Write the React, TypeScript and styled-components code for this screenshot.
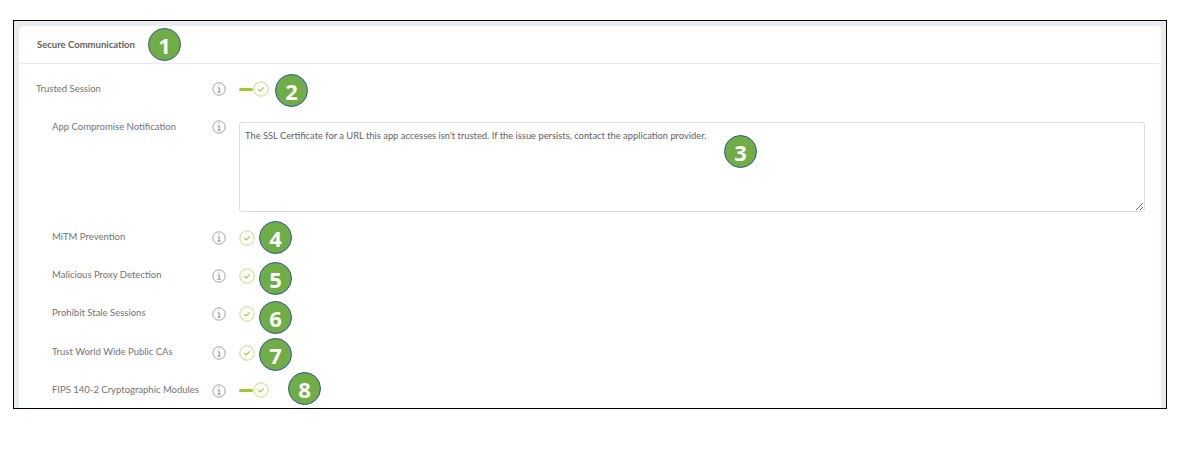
import styled, { createGlobalStyle } from "styled-components";

const GlobalStyle = createGlobalStyle`
  body {
    margin: 0;
    background: #fff;
    font-family: "Lato", "Liberation Sans", sans-serif;
  }
`;

const Frame = styled.div`
  box-sizing: border-box;
  width: 1154px;
  height: 389px;
  margin: 20px 0 0 13px;
  border: 1px solid #000;
  background: #e9ecef;
  padding: 5px 5px 0;
  overflow: hidden;
`;

const Card = styled.section`
  background: #fff;
  border-radius: 5px 5px 0 0;
  height: 100%;
`;

const CardHeader = styled.header`
  display: flex;
  align-items: center;
  height: 37px;
  padding-left: 18px;
  border-bottom: 1px solid #e8eaec;
`;

const Title = styled.h2`
  margin: 0 0 1px;
  width: 112px;
  font-size: 9.5px;
  font-weight: 700;
  color: #5f5f5f;
`;

const Body = styled.div`
  position: relative;
  padding-top: 17px;
`;

const Row = styled.div<{ $height: number; $indent?: boolean }>`
  display: flex;
  align-items: flex-start;
  height: ${(p) => p.$height}px;
  padding-left: ${(p) => (p.$indent ? 33 : 17)}px;
`;

const Label = styled.label<{ $indent?: boolean }>`
  width: ${(p) => (p.$indent ? 160 : 176)}px;
  font-size: 9.5px;
  line-height: 15px;
  color: #737373;
  white-space: nowrap;
`;

const InfoSlot = styled.span<{ $top: number }>`
  display: flex;
  align-items: center;
  flex: none;
  width: 27px;
  height: 16px;
  margin-top: ${(p) => p.$top}px;
`;

const Toggle = styled.span<{ $top: number }>`
  display: flex;
  align-items: center;
  margin-top: ${(p) => p.$top}px;
  height: 16px;
`;

const Track = styled.span`
  width: 14px;
  height: 3px;
  border-radius: 2px;
  background: #a3c62f;
`;

const Badge = styled.span<{ $gap?: number; $top?: number }>`
  box-sizing: border-box;
  flex: none;
  display: flex;
  align-items: center;
  justify-content: center;
  width: 33px;
  height: 33px;
  margin-left: ${(p) => p.$gap ?? 0}px;
  margin-top: ${(p) => p.$top ?? 0}px;
  border: 1px solid #2f5597;
  border-radius: 50%;
  background: #70ad47;
  color: #fff;
  font-family: "Open Sans", "Liberation Sans", sans-serif;
  font-size: 22px;
  font-weight: 700;
  line-height: 1;
`;

const FloatingBadge = styled(Badge)`
  position: absolute;
  left: 705px;
  top: 71px;
`;

const MessageBox = styled.textarea`
  box-sizing: border-box;
  width: 906px;
  height: 90px;
  margin-top: 3px;
  padding: 6px 5px;
  border: 1px solid #dcdcdc;
  border-radius: 3px;
  outline: none;
  background: #fff;
  color: #5f5f5f;
  font-family: inherit;
  font-size: 9.35px;
  line-height: 14px;
`;

const Info = ({ top = 1 }: { top?: number }) => (
  <InfoSlot $top={top}>
    <svg width="14" height="14" viewBox="0 0 14 14" fill="none">
      <circle cx="7" cy="7" r="6.2" stroke="#969696" strokeWidth="0.9" />
      <path d="M6.5 3.2h1M5.8 5.8h1.4v4.3M5.4 10.2h3.2" stroke="#808080" strokeWidth="0.9" />
    </svg>
  </InfoSlot>
);

const CheckCircle = () => (
  <svg width="16" height="16" viewBox="0 0 16 16" fill="none">
    <circle cx="8" cy="8" r="7.2" fill="#fff" stroke="#c5d98a" strokeWidth="1" />
    <path d="M5.2 8.2l2 1.8 3.6-3.6" stroke="#a3c62f" strokeWidth="1.1" />
  </svg>
);

const ToggleOn = () => (
  <Toggle $top={0}>
    <Track />
    <CheckCircle />
  </Toggle>
);

const Plain = () => (
  <Toggle $top={1}>
    <CheckCircle />
  </Toggle>
);

export default function App() {
  return (
    <>
      <GlobalStyle />
      <Frame>
        <Card>
          <CardHeader>
            <Title>Secure Communication</Title>
            <Badge $gap={-1}>1</Badge>
          </CardHeader>
          <Body>
            <Row $height={38}>
              <Label>Trusted Session</Label>
              <Info top={0} />
              <ToggleOn />
              <Badge $gap={6} $top={-7}>2</Badge>
            </Row>
            <Row $height={110} $indent>
              <Label $indent>App Compromise Notification</Label>
              <Info top={0} />
              <MessageBox
                readOnly
                defaultValue="The SSL Certificate for a URL this app accesses isn't trusted. If the issue persists, contact the application provider."
              />
            </Row>
            <FloatingBadge>3</FloatingBadge>
            <Row $height={38} $indent>
              <Label $indent>MiTM Prevention</Label>
              <Info />
              <Plain />
              <Badge $gap={4} $top={-8}>4</Badge>
            </Row>
            <Row $height={38} $indent>
              <Label $indent>Malicious Proxy Detection</Label>
              <Info />
              <Plain />
              <Badge $gap={4} $top={-5}>5</Badge>
            </Row>
            <Row $height={39} $indent>
              <Label $indent>Prohibit Stale Sessions</Label>
              <Info />
              <Plain />
              <Badge $gap={4} $top={-4}>6</Badge>
            </Row>
            <Row $height={38} $indent>
              <Label $indent>Trust World Wide Public CAs</Label>
              <Info />
              <Plain />
              <Badge $gap={4} $top={-6}>7</Badge>
            </Row>
            <Row $height={38} $indent>
              <Label $indent>FIPS 140-2 Cryptographic Modules</Label>
              <Info />
              <ToggleOn />
              <Badge $gap={19} $top={-10}>8</Badge>
            </Row>
          </Body>
        </Card>
      </Frame>
    </>
  );
}
